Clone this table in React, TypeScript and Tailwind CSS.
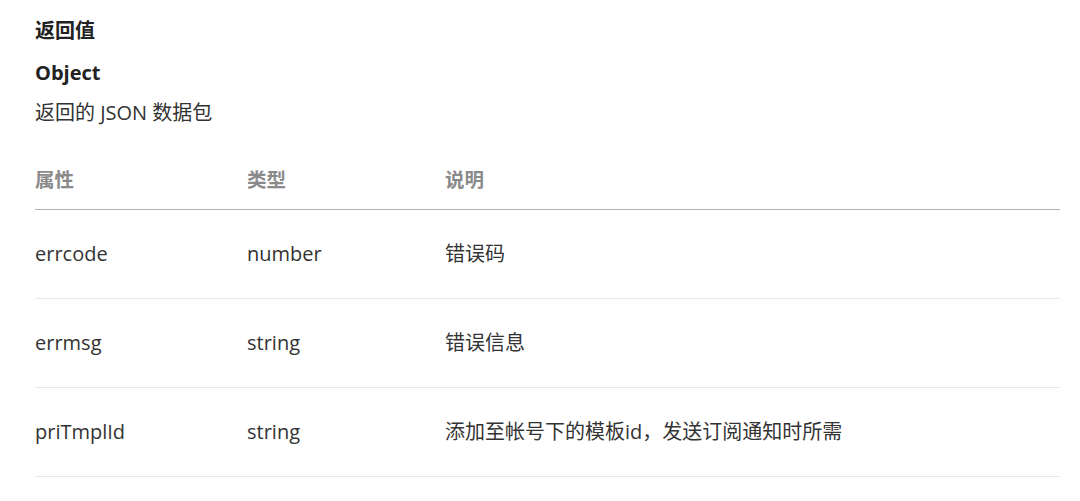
const rows = [
  { name: "errcode", type: "number", desc: "错误码" },
  { name: "errmsg", type: "string", desc: "错误信息" },
  { name: "priTmplId", type: "string", desc: "添加至帐号下的模板id，发送订阅通知时所需" },
];

const font = "font-['Open_Sans','Noto_Sans_CJK_SC',sans-serif]";

export default function App() {
  return (
    <div className={`w-[1080px] h-[501px] bg-white overflow-hidden pl-[35px] pr-[20px] pt-[17px] text-[#333] ${font}`}>
      <h3 className="text-[20px] leading-[28px] font-bold text-[#222]">返回值</h3>
      <div className="mt-[14px] text-[20px] leading-[28px] font-bold text-[#222]">Object</div>
      <p className="mt-[12px] text-[20px] leading-[28px]">返回的 JSON 数据包</p>

      <div className="mt-[23px]">
        <div className="flex h-[60px] items-center border-b border-[#b4b4b4] text-[19.5px] font-bold text-[#8a8a8a]">
          <div className="w-[212px]">属性</div>
          <div className="w-[198px]">类型</div>
          <div className="flex-1">说明</div>
        </div>
        {rows.map((r) => (
          <div key={r.name} className="flex h-[89px] items-center border-b border-[#e9e9e9] text-[20px]">
            <div className="w-[212px]">{r.name}</div>
            <div className="w-[198px]">{r.type}</div>
            <div className="flex-1">{r.desc}</div>
          </div>
        ))}
      </div>
    </div>
  );
}
